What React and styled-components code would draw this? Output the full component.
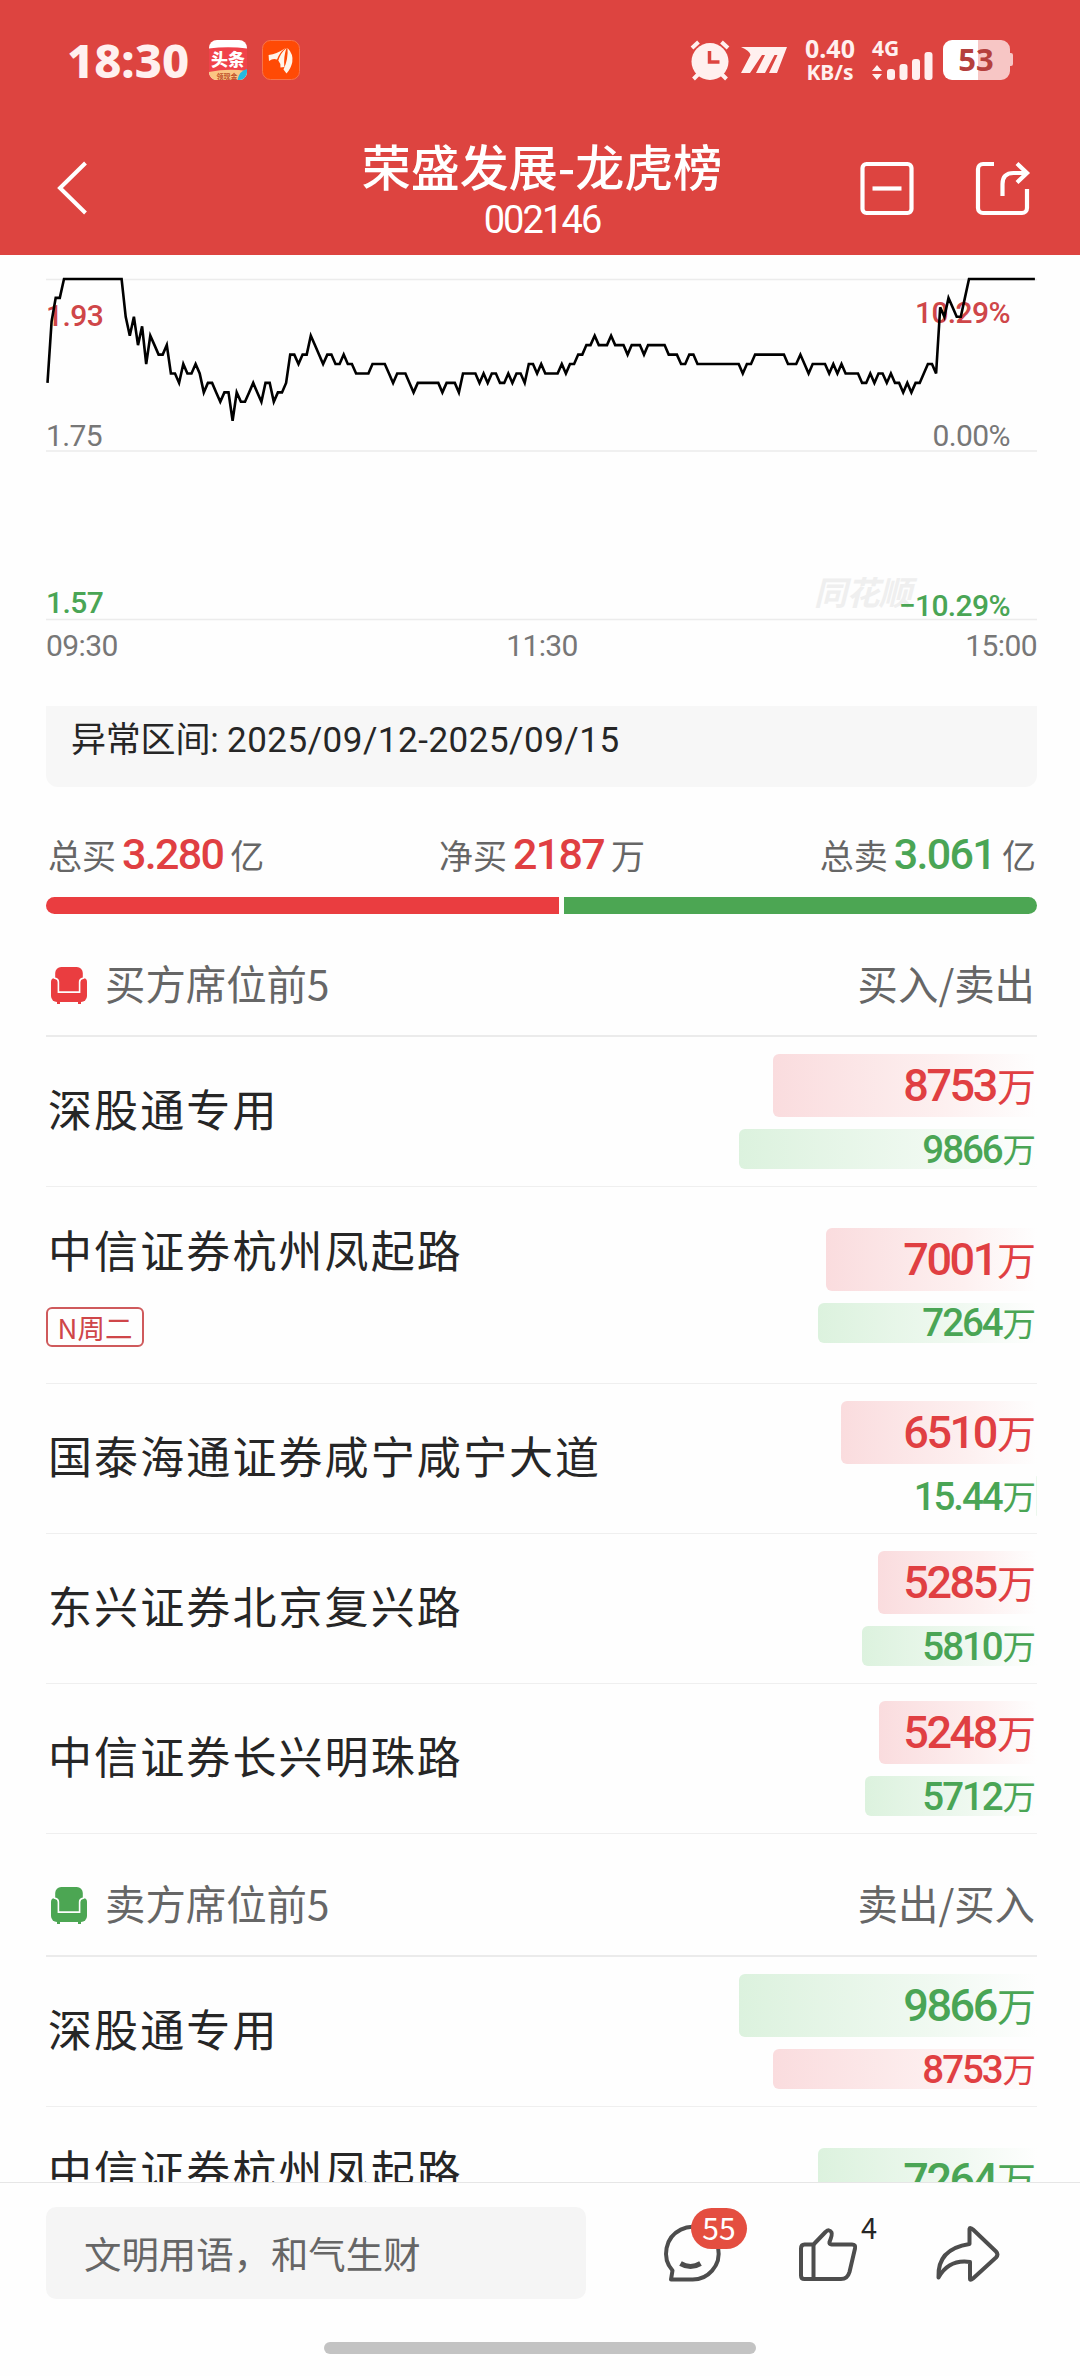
import styled, { createGlobalStyle } from 'styled-components';

const RED = '#e03f42';
const GREEN = '#4aa555';
const CJK = '"Noto Sans CJK SC"';

const GlobalStyle = createGlobalStyle`
    body {
        margin: 0;
        background-color: #fefefe;
        font-family: Roboto, ${CJK}, sans-serif;
        color: #262626;
    }

    * {
        box-sizing: border-box;
    }
`;

const Screen = styled.div`
    width: 1080px;
    height: 2376px;
    display: flex;
    flex-direction: column;
    overflow: hidden;

    svg {
        display: block;
        flex-shrink: 0;
        overflow: visible;
    }
`;

const Header = styled.header`
    height: 255px;
    flex-shrink: 0;
    background-color: #dd4440;
    color: #fff;
`;

const StatusBar = styled.div`
    height: 120px;
    padding: 0 66px 0 67px;
    display: flex;
    align-items: center;
    color: #fff0ef;
    font-family: "Noto Sans", ${CJK}, sans-serif;
    font-weight: 700;
`;

const Clock = styled.div`
    width: 142px;
    font-size: 47px;
    font-weight: 800;
    line-height: 64px;
`;

const AppIcon = styled.svg`
    width: 38px;
    height: 40px;
    margin-right: 15px;
`;

const StatusRight = styled.div`
    margin-left: auto;
    display: flex;
    align-items: center;
`;

const NetSpeed = styled.svg`
    width: 56px;
    height: 44px;
    margin: 0 14px;
`;

const NavBar = styled.div`
    height: 135px;
    padding: 0 50px 0 57px;
    display: flex;
    justify-content: space-between;
`;

const NavSide = styled.div`
    width: 170px;
    padding-top: 41px;
    display: flex;
    justify-content: ${props => props.$end ? 'space-between' : 'flex-start'};
`;

const Title = styled.div`
    padding-top: 15px;
    margin-right: 3px;
    text-align: center;

    h1 {
        margin: 0;
        font-family: ${CJK}, sans-serif;
        font-size: 49px;
        font-weight: 500;
        line-height: 60px;
    }

    p {
        margin: 8px 0 0;
        font-size: 38px;
        letter-spacing: -1.9px;
        line-height: 34px;
    }
`;

const Content = styled.main`
    height: 1927px;
    flex-shrink: 0;
    padding: 0 43px 0 46px;
    overflow: hidden;
`;

const Chart = styled.svg`
    width: 991px;
    height: 451px;

    text {
        font-size: 30px;
        letter-spacing: -0.6px;
    }
`;

const Notice = styled.div`
    height: 81px;
    padding: 10px 25px 0;
    border-radius: 0 0 12px 12px;
    background-color: #f7f7f7;
    font-size: 35px;
    line-height: 50px;
    letter-spacing: -0.2px;

    span {
        letter-spacing: 0.5px;
    }
`;

const Totals = styled.div`
    height: 110px;
    padding: 40px 1px 0 2px;
    display: flex;
    justify-content: space-between;
    font-size: 34px;
    line-height: 54px;
    color: #666;
`;

const Total = styled.span`
    display: flex;
    align-items: baseline;
    font-family: ${CJK}, sans-serif;

    b {
        margin: 0 7px 0 6px;
        font-family: Roboto, sans-serif;
        font-size: 43px;
        font-weight: 500;
        letter-spacing: -1.7px;
        color: ${props => props.$color};
    }
`;

const RatioBar = styled.div`
    height: 17px;
    display: flex;
    gap: 5px;
    border-radius: 9px;
    overflow: hidden;
`;

const RatioPart = styled.div`
    flex: ${props => props.$share};
    background-color: ${props => props.$color};
`;

const SeatHeader = styled.div`
    height: 123px;
    padding: 22px 2px 0 5px;
    display: flex;
    align-items: center;
    border-bottom: 2px solid #ebebeb;
    font-family: ${CJK}, sans-serif;
    font-size: 40.4px;
    color: #666;

    span {
        padding-bottom: 6px;
        margin-left: 18px;
    }

    span:last-child {
        margin-left: auto;
    }
`;

const SeatRow = styled.div`
    height: ${props => props.$tall ? 197 : 150}px;
    display: flex;
    align-items: center;
    justify-content: space-between;
    border-bottom: 1px solid #efefef;
`;

const SeatName = styled.div`
    min-height: ${props => props.$tall ? 137 : 0}px;
    padding: 0 0 ${props => props.$tall ? 0 : 8}px 2px;
    font-family: ${CJK}, sans-serif;
    font-size: 44px;
    line-height: 64px;
    letter-spacing: 2.1px;
`;

const Tag = styled.span`
    width: 98px;
    height: 40px;
    margin: 26px 0 0 -2px;
    display: flex;
    align-items: center;
    justify-content: center;
    border: 2px solid #cf5a5c;
    border-radius: 6px;
    font-size: 27.5px;
    line-height: 36px;
    letter-spacing: 0;
    color: #cf4649;
`;

const Amounts = styled.div`
    display: flex;
    flex-direction: column;
    align-items: flex-end;
    gap: 12px;
`;

const Amount = styled.div`
    height: ${props => props.$small ? 40 : 63}px;
    padding-right: 1px;
    display: flex;
    align-items: center;
    justify-content: flex-end;
    border-radius: 6px 0 0 6px;
    background-image: linear-gradient(90deg, ${props => props.$color === RED ? '#fadcde, #fdf0f0 65%' : '#dcf2de, #f0f9f1 65%'}, #fefefe);
    font-size: ${props => props.$small ? 38.5 : 45}px;
    font-weight: 500;
    letter-spacing: ${props => props.$small ? -2.1 : -2.4}px;
    color: ${props => props.$color};
    white-space: nowrap;

    span {
        padding-bottom: 3px;
        margin-left: 1px;
        font-family: ${CJK}, sans-serif;
        font-size: ${props => props.$small ? 33.5 : 39}px;
        font-weight: 400;
        letter-spacing: 0;
    }
`;

const Footer = styled.footer`
    height: 194px;
    flex-shrink: 0;
    border-top: 1px solid #e6e6e6;
    background-color: #fefefe;
`;

const Actions = styled.div`
    height: 117px;
    padding: 24px 0 0 46px;
    display: flex;
`;

const CommentInput = styled.div`
    width: 540px;
    height: 92px;
    flex-shrink: 0;
    margin-right: 74px;
    padding-left: 38px;
    display: flex;
    align-items: center;
    border-radius: 10px;
    background-color: #f5f5f5;
    font-family: ${CJK}, sans-serif;
    font-size: 37.4px;
    color: #666;
`;

const Action = styled.div`
    position: relative;
    width: 138px;
    flex-shrink: 0;
    padding-top: 15px;
`;

const Badge = styled.span`
    position: absolute;
    top: 1px;
    left: 31px;
    width: 56px;
    height: 41px;
    border-radius: 21px;
    background-color: #e44e40;
    font-family: ${CJK}, sans-serif;
    font-size: 30px;
    line-height: 39px;
    text-align: center;
    color: #fff;
`;

const LikeCount = styled.span`
    position: absolute;
    top: 2px;
    left: 63px;
    font-family: ${CJK}, sans-serif;
    font-size: 29px;
    line-height: 34px;
`;

const HomeIndicator = styled.div`
    width: 432px;
    height: 12px;
    margin: 42px auto 0;
    border-radius: 6px;
    background-color: #c3c3c3;
`;

// [minute, ticks below the limit price]; the line is straight between two points
const points = [
    [0, 11], [1, 4.5], [2, 2], [3, 2], [4, 0], [18, 0], [19, 4], [20, 6], [21, 4], [22, 7], [23, 5], [24, 9], [25, 6], [26, 7],
    [27, 8], [28, 8], [29, 7], [30, 10], [31, 10], [32, 11], [33, 9], [34, 10], [35, 10], [36, 9], [37, 10], [38, 12], [39, 11],
    [40, 11], [41, 12], [42, 13], [43, 12], [44, 12], [45, 15], [46, 12], [47, 13], [48, 13], [49, 12], [50, 11], [51, 12],
    [52, 13], [53, 11], [54, 11], [55, 13], [56, 12], [57, 12], [58, 11], [59, 8], [60, 8], [61, 9], [62, 8], [63, 8], [64, 6],
    [65, 7], [66, 8], [67, 9], [68, 8], [69, 8], [70, 9], [71, 9], [72, 8], [73, 9], [74, 9], [75, 10], [78, 10], [79, 9],
    [82, 9], [83, 10], [84, 11], [85, 10], [87, 10], [88, 11], [89, 12], [90, 11], [95, 11], [96, 12], [97, 11], [99, 11],
    [100, 12], [101, 10], [104, 10], [105, 11], [106, 10], [107, 11], [108, 10], [109, 10], [110, 11], [111, 11], [112, 10],
    [113, 11], [114, 10], [115, 10], [116, 11], [117, 9], [118, 9], [119, 10], [120, 9], [121, 10], [124, 10], [125, 9],
    [126, 10], [127, 9], [128, 9], [129, 8], [130, 8], [131, 7], [132, 7], [133, 6], [134, 7], [136, 7], [137, 6], [138, 7],
    [140, 7], [141, 8], [142, 7], [144, 7], [145, 8], [146, 7], [150, 7], [151, 8], [153, 8], [154, 9], [155, 9], [156, 8],
    [157, 8], [158, 9], [168, 9], [169, 10], [170, 9], [171, 9], [172, 8], [179, 8], [180, 9], [182, 9], [183, 8], [184, 9],
    [185, 10], [186, 9], [189, 9], [190, 10], [191, 9], [192, 10], [193, 9], [194, 10], [197, 10], [198, 11], [199, 11],
    [200, 10], [201, 11], [202, 10], [203, 10], [204, 11], [205, 10], [206, 11], [207, 11], [208, 12], [209, 11], [210, 12],
    [211, 11], [212, 11], [213, 10], [214, 9], [215, 9], [216, 10], [217, 3], [218, 4], [219, 2], [220, 3], [221, 4], [222, 4],
    [223, 2], [224, 0], [240, 0]
];

const line = points.map(([minute, tick]) => `${(1.5 + minute * 4.114).toFixed(1)},${(24 + tick * 9.45).toFixed(1)}`).join(' ');

const buySeats = [
    { name: '深股通专用', buy: '8753', sell: '9866' },
    { name: '中信证券杭州凤起路', tag: 'N周二', tall: true, buy: '7001', sell: '7264' },
    { name: '国泰海通证券咸宁咸宁大道', buy: '6510', sell: '15.44' },
    { name: '东兴证券北京复兴路', buy: '5285', sell: '5810' },
    { name: '中信证券长兴明珠路', buy: '5248', sell: '5712' }
];

const sellSeats = [
    { name: '深股通专用', buy: '8753', sell: '9866' },
    { name: '中信证券杭州凤起路', tall: true, sell: '7264' }
];

const ArmchairIcon = ({ color }) => (
    <svg width="36" height="38" viewBox="0 0 36 38" fill={color}>
        <path d="M6 34h3v3H6zM27 34h3v3h-3z" />
        <path d="M0 15a4 4 0 0 1 4-4h28a4 4 0 0 1 4 4v14a6 6 0 0 1-6 6H6a6 6 0 0 1-6-6z" />
        <path d="M4.2 10.5V6a6 6 0 0 1 6-6h15.600a6 6 0 0 1 6 6v4.500c-2.600.5-4 2-4 4.500v9.300H8.200V15c0-2.500-1.400-4-4-4.500z" stroke="#fefefe" strokeWidth="3.200" paintOrder="stroke" />
    </svg>
);

const Figure = ({ value, color, small }) => (
    <Amount $color={color} $small={small} style={{ width: Math.max(1, value * 0.03016) }}>
        {value}<span>万</span>
    </Amount>
);

const SeatTable = ({ title, columns, color, seats, sellFirst }) => (
    <section>
        <SeatHeader>
            <ArmchairIcon color={color} />
            <span>{title}</span>
            <span>{columns}</span>
        </SeatHeader>
        {seats.map(seat => {
            const first = sellFirst ? seat.sell : seat.buy;
            const second = sellFirst ? seat.buy : seat.sell;
            return (
                <SeatRow key={seat.name} $tall={seat.tall}>
                    <SeatName $tall={seat.tall}>
                        {seat.name}
                        {seat.tag && <Tag>{seat.tag}</Tag>}
                    </SeatName>
                    <Amounts>
                        <Figure value={first} color={sellFirst ? GREEN : RED} />
                        {second ? <Figure value={second} color={sellFirst ? RED : GREEN} small /> : <Amount $small />}
                    </Amounts>
                </SeatRow>
            );
        })}
    </section>
);

const App = () => {

    return (

        <Screen>
            <GlobalStyle />
            <Header>
                <StatusBar>
                    <Clock>18:30</Clock>
                    <AppIcon viewBox="0 0 38 40">
                        <rect width="38" height="40" rx="8" fill="#fff" />
                        <path d="M0 8.500Q19 6 38 8.500V32H0z" fill="#f0424a" />
                        <path d="M0 32Q19 28 38 31v1a8 8 0 0 1-8 8H8a8 8 0 0 1-8-8z" fill="#fbc583" />
                        <path d="M38 29v3a8 8 0 0 1-8 8h-1.500Q30 31 38 29z" fill="#25b9e0" />
                        <text x="19" y="26" textAnchor="middle" fontSize="17" fontWeight="900" fill="#fff">头条</text>
                        <text x="18" y="38.500" textAnchor="middle" fontSize="7" fill="#c0502a">领现金</text>
                    </AppIcon>
                    <AppIcon viewBox="0 0 38 40">
                        <rect x=".5" y=".5" width="37" height="39" rx="8" fill="#ff4a05" stroke="#f8744a" />
                        <path d="M6.600 15Q15 14 23.500 8Q17 13 15 19.500Q11 18 7 21zM16.300 20.500Q18.500 13 24.500 8Q21.500 16 22.300 27L18.500 27.500Q19 23.500 16.300 20.500zM25.500 8Q31.500 14 30.300 22Q29 28.500 24.500 33.500L21.500 29.500Q26.500 19 25.500 8z" fill="#fff4e8" />
                    </AppIcon>
                    <StatusRight>
                        <svg width="40" height="40" viewBox="0 0 40 40" fill="currentColor">
                            <circle cx="20" cy="21.500" r="18.500" />
                            <path d="M2 8l6.500-6M38 8l-6.500-6M3.500 39l5-5M36.500 39l-5-5" stroke="currentColor" strokeWidth="4" />
                            <path d="M19.500 11v11h10" fill="none" stroke="#dd4440" strokeWidth="3.500" />
                        </svg>
                        <svg width="48" height="26" viewBox="0 0 48 26" style={{ marginLeft: 10 }} fill="currentColor">
                            <path d="M1 0h46L37 26h-8l8.500-18h-3L25 26h-9l9-18h-3L10 26H1l9.500-18Q10 4 1 0z" />
                        </svg>
                        <NetSpeed viewBox="0 0 56 44" fill="currentColor">
                            <text x="28" y="19.500" textAnchor="middle" fontSize="25">0.40</text>
                            <text x="28" y="41.500" textAnchor="middle" fontSize="21">KB/s</text>
                        </NetSpeed>
                        <svg width="61" height="40" viewBox="0 0 61 40" fill="currentColor">
                            <text x="0" y="15.500" fontSize="21">4G</text>
                            <path d="M0 31l5-6 5 6zM0 34h10l-5 6z" />
                            <rect x="15" y="29" width="8" height="11" rx="3" />
                            <rect x="27.500" y="24" width="8" height="16" rx="3" />
                            <rect x="40" y="19" width="8" height="21" rx="3" />
                            <rect x="52.500" y="12" width="8" height="28" rx="3" />
                        </svg>
                        <svg width="71" height="40" viewBox="0 0 71 40" style={{ marginLeft: 10 }}>
                            <path d="M35 0h23a9 9 0 0 1 9 9v4h1a2 2 0 0 1 2 2v9a2 2 0 0 1-2 2h-1v5a9 9 0 0 1-9 9H35z" fill="#f7c6c5" />
                            <path d="M35 0H9a9 9 0 0 0-9 9v22a9 9 0 0 0 9 9h26z" fill="#fff" />
                            <text x="33" y="31" textAnchor="middle" fontSize="31" fill="#b5403d">53</text>
                        </svg>
                    </StatusRight>
                </StatusBar>
                <NavBar>
                    <NavSide>
                        <svg width="31" height="54" viewBox="0 0 31 54" fill="none" stroke="#fff" strokeWidth="4">
                            <path d="M28.500 2L3 27l25.500 25" />
                        </svg>
                    </NavSide>
                    <Title>
                        <h1>荣盛发展-龙虎榜</h1>
                        <p>002146</p>
                    </Title>
                    <NavSide $end>
                        <svg width="54" height="54" viewBox="0 0 54 54" fill="none" stroke="#fff" strokeWidth="4.200">
                            <rect x="2.500" y="3" width="49" height="49" rx="4" />
                            <path d="M12.500 27.500h29" />
                        </svg>
                        <svg width="54" height="54" viewBox="0 0 54 54" fill="none" stroke="#fff" strokeWidth="4.200">
                            <path d="M18 3H7a5 5 0 0 0-5 5v39a5 5 0 0 0 5 5h39a5 5 0 0 0 5-5V28" />
                            <path d="M26.500 35V23q0-11 11-11H51M41 2.500l10 9.500-10 9.500" />
                        </svg>
                    </NavSide>
                </NavBar>
            </Header>

            <Content>
                <Chart viewBox="0 0 991 451">
                    <path d="M0 24.500h991M0 196h991M0 364.500h991" stroke="#ececec" strokeWidth="1.500" />
                    <text x="768" y="350" fontFamily={CJK} style={{ fontSize: 33 }} fontWeight="700" fontStyle="italic" fill="#efefef">同花顺</text>
                    <text x="0" y="70.500" fontWeight="500" fill="#cf4649">1.93</text>
                    <text x="964" y="67.500" fontWeight="500" textAnchor="end" fill="#cf4649">10.29%</text>
                    <text x="0" y="190.500" fill="#777">1.75</text>
                    <text x="964" y="190.500" textAnchor="end" fill="#777">0.00%</text>
                    <text x="0" y="358" fontWeight="500" fill={GREEN}>1.57</text>
                    <text x="964" y="360.500" fontWeight="500" textAnchor="end" fill={GREEN}>−10.29%</text>
                    <text x="0" y="401" fill="#777">09:30</text>
                    <text x="496" y="401" textAnchor="middle" fill="#777">11:30</text>
                    <text x="991" y="401" textAnchor="end" fill="#777">15:00</text>
                    <polyline points={line} fill="none" stroke="#000" strokeWidth="2.600" />
                </Chart>
                <Notice>异常区间: <span>2025/09/12-2025/09/15</span></Notice>
                <Totals>
                    <Total $color={RED}>总买<b>3.280</b>亿</Total>
                    <Total $color={RED}>净买<b>2187</b>万</Total>
                    <Total $color={GREEN}>总卖<b>3.061</b>亿</Total>
                </Totals>
                <RatioBar>
                    <RatioPart $share={513} $color="#ea3d40" />
                    <RatioPart $share={473} $color="#4ca653" />
                </RatioBar>
                <SeatTable title="买方席位前5" columns="买入/卖出" color="#ea3d40" seats={buySeats} />
                <SeatTable title="卖方席位前5" columns="卖出/买入" color="#4ca653" seats={sellSeats} sellFirst />
            </Content>

            <Footer>
                <Actions>
                    <CommentInput>文明用语，和气生财</CommentInput>
                    <Action>
                        <svg width="62" height="62" viewBox="0 0 62 62" fill="none" stroke="#4d4d4d" strokeWidth="4">
                            <path d="M30.700 57.500H11l1.500-9A26.300 26.300 0 1 1 30.700 57.500z" strokeLinejoin="round" />
                            <path d="M20.500 41.500q10 6 20 0" strokeWidth="5" />
                        </svg>
                        <Badge>55</Badge>
                    </Action>
                    <Action>
                        <svg width="62" height="62" viewBox="0 0 62 62" fill="none" stroke="#4d4d4d" strokeWidth="4" strokeLinejoin="round">
                            <path d="M15.500 22.500L27.500 10q4-3.500 6 .5 1 2-2 9.500-.5 2.500 2 2.500H54q4 0 3 4L51.500 50q-2 7-8.500 7H6.500q-3.500 0-3.500-3.500v-27q0-4 3.500-4z" />
                            <path d="M15.500 22.500V57" />
                        </svg>
                        <LikeCount>4</LikeCount>
                    </Action>
                    <Action>
                        <svg width="66" height="62" viewBox="0 0 66 62" fill="none" stroke="#4d4d4d" strokeWidth="4" strokeLinejoin="round">
                            <path d="M33.500 7Q34 5 37 7.500L60 29.500q3 3 0 6L37 56.500q-3 2.500-3 0V40Q13 37 2.500 55.500 1 27 33.500 22z" />
                        </svg>
                    </Action>
                </Actions>
                <HomeIndicator />
            </Footer>
        </Screen>

    )

}

export default App;
